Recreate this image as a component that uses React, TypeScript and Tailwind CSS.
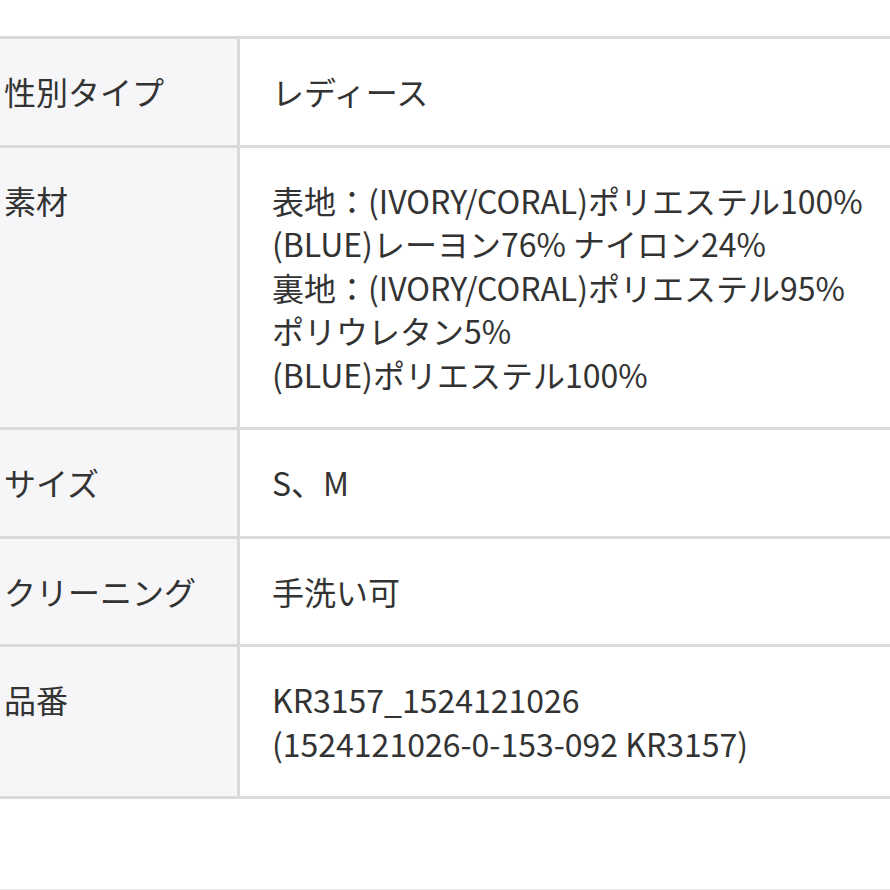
const rows: { label: string; lines: string[] }[] = [
  { label: "性別タイプ", lines: ["レディース"] },
  {
    label: "素材",
    lines: [
      "表地：(IVORY/CORAL)ポリエステル100%",
      "(BLUE)レーヨン76% ナイロン24%",
      "裏地：(IVORY/CORAL)ポリエステル95%",
      "ポリウレタン5%",
      "(BLUE)ポリエステル100%",
    ],
  },
  { label: "サイズ", lines: ["S、M"] },
  { label: "クリーニング", lines: ["手洗い可"] },
  {
    label: "品番",
    lines: ["KR3157_1524121026", "(1524121026-0-153-092 KR3157)"],
  },
];

export default function App() {
  return (
    <div
      className="w-[890px] h-[890px] bg-white overflow-hidden text-[#333333]"
      style={{ fontFamily: '"Noto Sans CJK JP", "Noto Sans", sans-serif' }}
    >
      <div className="h-[36px]" />
      <div className="border-t-[3px] border-[#dadada]">
        {rows.map((row) => (
          <div key={row.label} className="flex border-b-[3px] border-[#dadada]">
            <div className="w-[240px] shrink-0 bg-[#f6f6f8] border-r-[3px] border-[#dadada] pl-[4px] pt-[31px] pb-[30px] text-[32px] leading-[43.5px]">
              {row.label}
            </div>
            <div className="flex-1 pl-[32px] pt-[31px] pb-[31px] text-[32px] leading-[43.5px]">
              {row.lines.map((l, i) => (
                <div key={i} className="whitespace-nowrap">{l}</div>
              ))}
            </div>
          </div>
        ))}
      </div>
      <div className="h-[91px] border-b border-[#e6e6e6]" />
    </div>
  );
}
